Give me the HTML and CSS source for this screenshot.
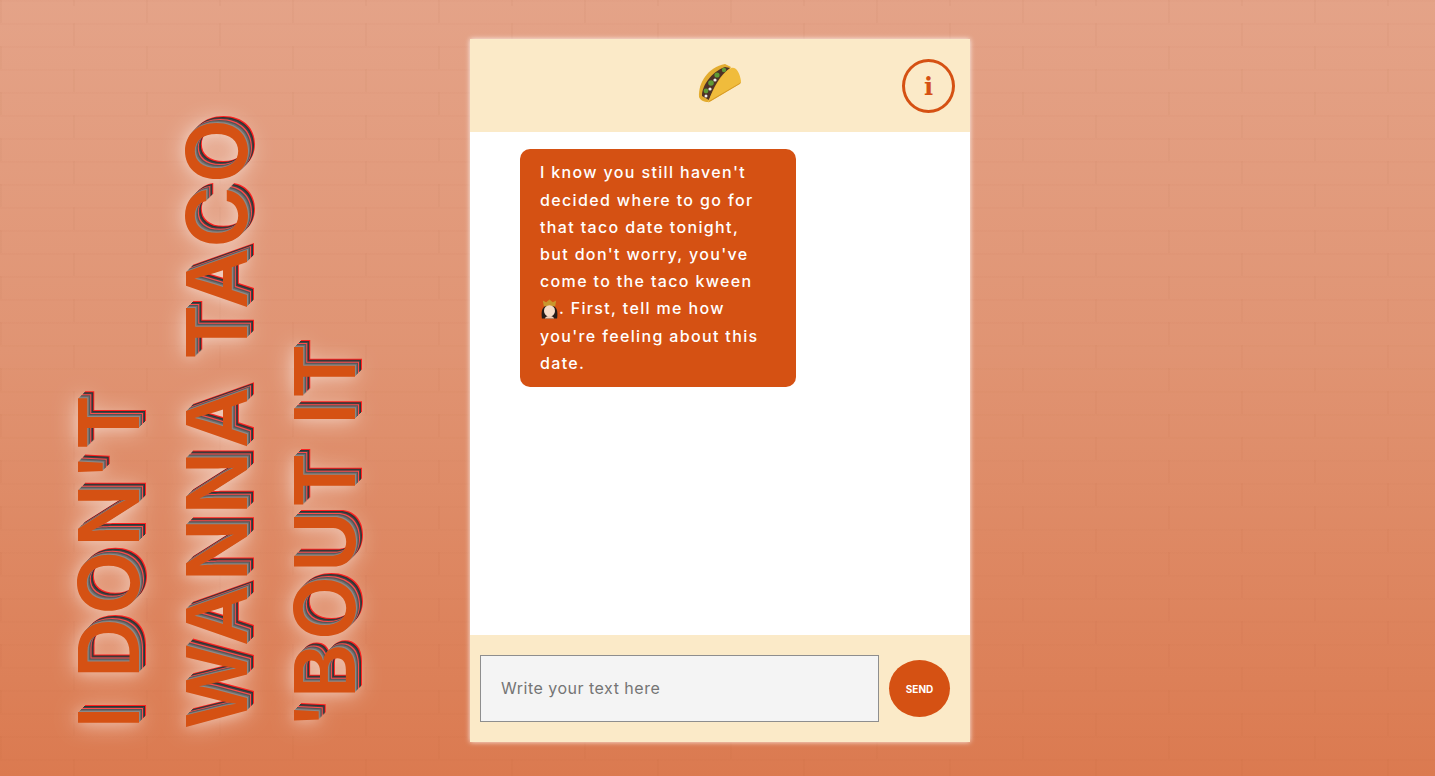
FILE: index.html
```html
<!DOCTYPE html>
<html>
<head>
  <title>I Don't Wanna Taco 'Bout It</title>
  <link rel="stylesheet" href="styles.css">
</head>
<body>
  <div class="page">
    <h1 class="title">
      <span>I DON'T</span>
      <span>WANNA TACO</span>
      <span>'BOUT IT</span>
    </h1>

    <main class="chat">
      <header class="chat-header">
        <svg class="taco" viewBox="0 0 44 40" aria-label="taco">
          <path d="M1 34C0 20 10 4 27 1l6 3L10 39c-4 0-8-2-9-5z" fill="#e3ac2f"/>
          <path d="M4 33C4 23 13 9 27 4l5 1C22 12 15 25 11 37z" fill="#4e3226"/>
          <circle cx="8" cy="28" r="2.400" fill="#5f9a35"/>
          <circle cx="13" cy="20" r="2.800" fill="#5f9a35"/>
          <circle cx="19" cy="12" r="2.600" fill="#5f9a35"/>
          <circle cx="26" cy="7" r="2.200" fill="#5f9a35"/>
          <circle cx="12" cy="26" r="1.600" fill="#eee"/>
          <circle cx="17" cy="17" r="1.600" fill="#eee"/>
          <circle cx="8" cy="33" r="1.500" fill="#eee"/>
          <path d="M10 39C16 25 23 11 33 5c5-2 9 5 10 13 0 2-1 3-3 4L13 38c-2 1-3 2-3 1z" fill="#f0bc3c"/>
          <path d="M11 38l29-17c2-1 3-2 3-3 0 2-1 3-3 4L13 38c-1 1-3 1-2 0z" fill="#d79a25"/>
        </svg>
        <button class="info-btn" type="button">i</button>
      </header>

      <section class="messages">
        <div class="bubble">
          I know you still haven't decided where to go for that taco date tonight, but don't worry, you've come to the taco kween
          <svg class="queen" viewBox="0 0 20 20" aria-label="queen">
            <path d="M2 20c-1-8 0-14 8-14s9 6 8 14z" fill="#241c1a"/>
            <path d="M4 7L3 1l3.500 2L10 0l3.500 3L17 1l-1 6z" fill="#c9962c"/>
            <ellipse cx="10" cy="12" rx="5.800" ry="6" fill="#f6dcc8"/>
            <path d="M5 20c1-2 3-3 5-3s4 1 5 3z" fill="#f0d0ba"/>
          </svg>. First, tell me how you're feeling about this date.
        </div>
      </section>

      <form class="chat-form">
        <input type="text" class="chat-input" placeholder="Write your text here">
        <button type="submit" class="send-btn">SEND</button>
      </form>
    </main>
  </div>
</body>
</html>
```

FILE: styles.css
```css
html, body {
  height: 100%;
}

body {
  position: relative;
  margin: 0;
  font-family: "Inter", "Open Sans", sans-serif;
  background-color: #df8a62;
  background-image:
    linear-gradient(rgba(150, 70, 30, 0.025) 2px, transparent 2px),
    linear-gradient(180deg, #e4a388 0%, #e09473 45%, #db7a50 100%);
  background-size: 100% 23px, 100% 100%;
  background-repeat: repeat, no-repeat;
  overflow: hidden;
}

/* brick joints, every other row is shifted */
body::before,
body::after {
  content: "";
  position: absolute;
  top: 0;
  left: 0;
  width: 100%;
  height: 100%;
  background-image: linear-gradient(90deg, rgba(150, 70, 30, 0.03) 2px, transparent 2px);
  background-size: 146px 100%;
  -webkit-mask-image: repeating-linear-gradient(180deg, #000 0, #000 23px, transparent 23px, transparent 46px);
  mask-image: repeating-linear-gradient(180deg, #000 0, #000 23px, transparent 23px, transparent 46px);
}

body::after {
  background-position: 73px 0;
  -webkit-mask-position: 0 23px;
  mask-position: 0 23px;
}

.page {
  position: relative;
  z-index: 1;
  display: flex;
  align-items: flex-start;
  height: 776px;
  padding-top: 39px;
  box-sizing: border-box;
}

.title {
  flex: none;
  display: flex;
  flex-direction: column;
  box-sizing: border-box;
  width: 470px;
  height: 690px;
  margin: 0;
  padding: 0 55px 0 0;
  writing-mode: vertical-rl;
  transform: rotate(180deg);
  font-family: "Inter", "Liberation Sans", sans-serif;
  font-size: 84px;
  font-weight: 600;
  line-height: 108px;
  letter-spacing: 3px;
  color: #d55113;
  white-space: nowrap;
  text-shadow:
    1px 1px 0 #8a8a8a,
    2px 2px 0 #6e6e6e,
    3px 3px 0 #555,
    4px 4px 0 #ff4b4b,
    5px 5px 0 #444,
    6px 6px 0 #333,
    7px 7px 0 #ff2020,
    0 0 24px rgba(255, 255, 255, 0.7),
    0 0 12px rgba(255, 255, 255, 0.3);
}

.chat {
  flex: none;
  display: flex;
  flex-direction: column;
  width: 500px;
  height: 703px;
  background-color: #fff;
  box-shadow: 0 0 5px rgba(255, 255, 255, 0.9);
}

.chat-header {
  flex: none;
  display: flex;
  align-items: center;
  justify-content: center;
  position: relative;
  height: 93px;
  background-color: #fbeac8;
}

.taco {
  width: 44px;
  height: 40px;
  margin-top: -6px;
}

.info-btn {
  position: absolute;
  top: 20px;
  right: 15px;
  width: 53px;
  height: 54px;
  padding: 0;
  border: 3px solid #d55113;
  border-radius: 50%;
  background: transparent;
  color: #d55113;
  font-family: "DejaVu Serif", serif;
  font-size: 24px;
  font-weight: bold;
  cursor: pointer;
}

.messages {
  flex: 1;
  padding: 17px 50px;
}

.bubble {
  box-sizing: border-box;
  width: 276px;
  padding: 10.4px 31px 9.6px 20px;
  border-radius: 10px;
  background-color: #d55113;
  color: #fff;
  font-size: 16px;
  font-weight: 500;
  line-height: 27.2px;
  letter-spacing: 1.35px;
}

.queen {
  width: 19px;
  height: 20px;
  vertical-align: -5px;
}

.chat-form {
  flex: none;
  display: flex;
  align-items: center;
  gap: 10px;
  height: 107px;
  padding: 0 20px 0 10px;
  box-sizing: border-box;
  background-color: #fbeac8;
}

.chat-input {
  flex: none;
  box-sizing: border-box;
  width: 399px;
  height: 67px;
  padding: 0 20px 2px;
  border: 1px solid #8e8e8e;
  background-color: #f4f4f4;
  font-family: inherit;
  font-size: 16px;
  letter-spacing: 0.5px;
}

.chat-input::placeholder {
  color: #757575;
}

.send-btn {
  flex: none;
  width: 61px;
  height: 57px;
  padding: 0;
  border: none;
  border-radius: 50%;
  background-color: #d55113;
  color: #fff;
  font-family: inherit;
  font-size: 10px;
  font-weight: 700;
  cursor: pointer;
}
```
